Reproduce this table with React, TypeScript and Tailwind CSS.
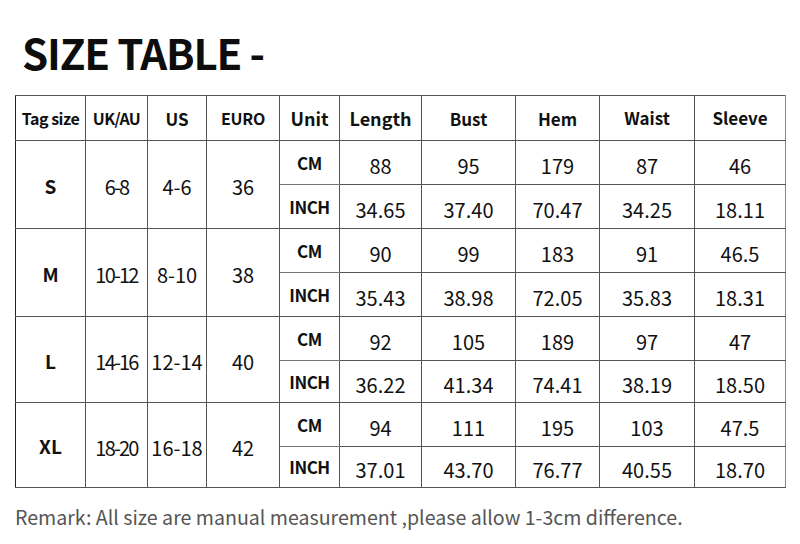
import React from 'react';

const rows = [
  { tag: 'S', uk: '6-8', us: '4-6', euro: '36', cm: ['88', '95', '179', '87', '46'], inch: ['34.65', '37.40', '70.47', '34.25', '18.11'], h: ['h-[44px]', 'h-[44px]'] },
  { tag: 'M', uk: '10-12', us: '8-10', euro: '38', cm: ['90', '99', '183', '91', '46.5'], inch: ['35.43', '38.98', '72.05', '35.83', '18.31'], h: ['h-[44px]', 'h-[44px]'] },
  { tag: 'L', uk: '14-16', us: '12-14', euro: '40', cm: ['92', '105', '189', '97', '47'], inch: ['36.22', '41.34', '74.41', '38.19', '18.50'], h: ['h-[44px]', 'h-[42px]'] },
  { tag: 'XL', uk: '18-20', us: '16-18', euro: '42', cm: ['94', '111', '195', '103', '47.5'], inch: ['37.01', '43.70', '76.77', '40.55', '18.70'], h: ['h-[44px]', 'h-[41px]'] },
];

const cell = 'border border-[#555] p-0 text-center align-middle';

export default function App() {
  return (
    <div className="w-[800px] h-[544px] bg-white text-[#111] font-['Noto_Sans_CJK_SC','Noto_Sans',sans-serif] overflow-hidden">
      <h1 className="pl-[22px] pt-[27px] h-[95px] text-[42px] leading-[50px] font-bold tracking-[-1.2px] text-[#0d0d0d]">
        SIZE TABLE -
      </h1>
      <table className="ml-[15px] border-collapse table-fixed w-[770px]">
        <colgroup>
          <col className="w-[70px]" />
          <col className="w-[62px]" />
          <col className="w-[59px]" />
          <col className="w-[73px]" />
          <col className="w-[60px]" />
          <col className="w-[82px]" />
          <col className="w-[94px]" />
          <col className="w-[84px]" />
          <col className="w-[95px]" />
          <col className="w-[91px]" />
        </colgroup>
        <thead>
          <tr className="h-[45px] font-bold">
            <th className={`${cell} text-[16px] tracking-[-0.5px] border-l-[#222]`}>Tag size</th>
            <th className={`${cell} text-[16px] tracking-[-0.6px]`}>UK/AU</th>
            <th className={`${cell} text-[17px] pt-[2px]`}>US</th>
            <th className={`${cell} text-[16px] tracking-[-0.3px]`}>EURO</th>
            <th className={`${cell} text-[18px] border-l-[#888]`}>Unit</th>
            <th className={`${cell} text-[18px] border-l-[#999]`}>Length</th>
            <th className={`${cell} text-[17px] border-l-[#999] pt-[2px]`}>Bust</th>
            <th className={`${cell} text-[17px] border-l-[#999] pt-[2px]`}>Hem</th>
            <th className={`${cell} text-[17px] border-l-[#999]`}>Waist</th>
            <th className={`${cell} text-[17px] border-l-[#999] border-r-[#888]`}>Sleeve</th>
          </tr>
        </thead>
        <tbody>
          {rows.map((r) => (
            <React.Fragment key={r.tag}>
              <tr className={`${r.h[0]} border-t border-t-[#222]`}>
                <td rowSpan={2} className={`${cell} text-[19px] font-bold pt-[3px] border-l-[#222]`}>{r.tag}</td>
                <td rowSpan={2} className={`${cell} text-[20px] tracking-[-1.8px] pt-[5px]`}>{r.uk}</td>
                <td rowSpan={2} className={`${cell} text-[20px] pt-[5px]`}>{r.us}</td>
                <td rowSpan={2} className={`${cell} text-[20px] pt-[5px]`}>{r.euro}</td>
                <td className={`${cell} text-[17px] font-bold tracking-[-0.3px] border-l-[#888] border-b-[#777]`}>CM</td>
                {r.cm.map((v, i) => (
                  <td key={i} className={`${cell} text-[20px] pt-[6px] border-l-[#999] ${i === 4 ? 'border-r-[#888]' : ''}`}>{v}</td>
                ))}
              </tr>
              <tr className={r.h[1]}>
                <td className={`${cell} text-[17px] font-bold tracking-[-0.5px] border-l-[#888]`}>INCH</td>
                {r.inch.map((v, i) => (
                  <td key={i} className={`${cell} text-[20px] pt-[6px] border-l-[#999] ${i === 4 ? 'border-r-[#888]' : ''}`}>{v}</td>
                ))}
              </tr>
            </React.Fragment>
          ))}
        </tbody>
      </table>
      <p className="pl-[15px] pt-[15px] text-[19.6px] leading-[28px] text-[#555]">
        Remark: All size are manual measurement ,please allow 1-3cm difference.
      </p>
    </div>
  );
}
